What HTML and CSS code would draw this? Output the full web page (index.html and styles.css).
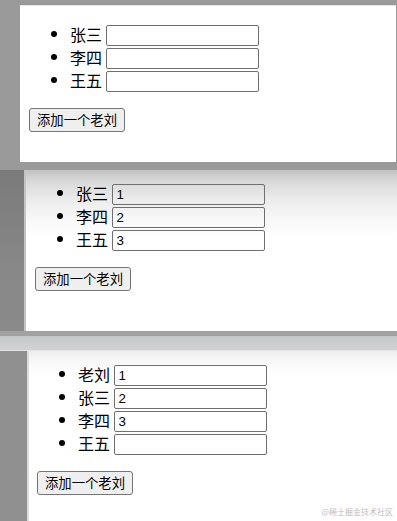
FILE: index.html
```
<!DOCTYPE html>
<html lang="zh">
<head>
<meta charset="utf-8">
<title>添加一个老刘</title>
<link rel="stylesheet" href="styles.css">
</head>
<body>
<div class="shot shot1">
  <div class="card card1">
    <ul class="list">
      <li>张三 <input class="field" type="text"></li>
      <li>李四 <input class="field" type="text"></li>
      <li>王五 <input class="field" type="text"></li>
    </ul>
    <button class="btn" type="button">添加一个老刘</button>
  </div>
</div>
<div class="shot shot2">
  <div class="gutter gutter2"></div>
  <div class="card card2">
    <ul class="list">
      <li>张三 <input class="field" type="text" value="1"></li>
      <li>李四 <input class="field" type="text" value="2"></li>
      <li>王五 <input class="field" type="text" value="3"></li>
    </ul>
    <button class="btn" type="button">添加一个老刘</button>
  </div>
</div>
<div class="sep"></div>
<div class="shot shot3">
  <div class="gutter gutter3"></div>
  <div class="card card3">
    <ul class="list">
      <li>老刘 <input class="field" type="text" value="1"></li>
      <li>张三 <input class="field" type="text" value="2"></li>
      <li>李四 <input class="field" type="text" value="3"></li>
      <li>王五 <input class="field" type="text"></li>
    </ul>
    <button class="btn" type="button">添加一个老刘</button>
  </div>
  <div class="watermark">@稀土掘金技术社区</div>
</div>
</body>
</html>
```
FILE: styles.css
```
html, body {
  margin: 0;
  padding: 0;
}
body {
  width: 397px;
  height: 521px;
  overflow: hidden;
  background: #999;
  font-family: "Liberation Sans", "Noto Sans CJK SC", sans-serif;
  color: #000;
}
.shot {
  box-sizing: border-box;
  display: flex;
}
.shot1 {
  height: 170px;
  background: #9a9a9a;
  padding: 5px 1px 8px 20px;
}
.card {
  flex: 1;
  box-sizing: border-box;
  padding-left: 9px;
}
.card1 {
  background: #fff;
  border-top: 1px solid #e4e4e4;
  padding-top: 19px;
}
.shot2 {
  height: 161px;
}
.gutter2 {
  width: 24px;
  background: linear-gradient(#7a7a7a, #888 60%, #8a8a8a);
  border-right: 2px solid #c4c4c4;
}
.card2 {
  padding-top: 14px;
  background: linear-gradient(#c2c2c2 0, #dadada 12px, #ececec 30px, #f8f8f8 50px, #fff 70px);
}
.card2 .field {
  background: transparent;
}
.sep {
  height: 20px;
  background: linear-gradient(#a2a2a2 0, #a2a2a2 5px, #c4c8c8 5px, #d0d3d3 19px, #e4e4e4 19px);
}
.shot3 {
  height: 170px;
  position: relative;
}
.gutter3 {
  width: 27px;
  background: #909090;
  border-right: 2px solid #dcdcdc;
}
.card3 {
  padding-top: 14px;
  padding-left: 8px;
  background: linear-gradient(#ededed 0, #f8f8f8 10px, #fff 24px);
}
.list {
  margin: 0 0 14px;
  padding-left: 41px;
  font-size: 16px;
  list-style: none;
}
.list li {
  height: 23px;
  line-height: 21px;
  white-space: nowrap;
}
.list li::before {
  content: "";
  display: inline-block;
  width: 6px;
  height: 6px;
  border-radius: 50%;
  background: #000;
  vertical-align: top;
  margin: 6px 13px 0 -19px;
}
.field {
  box-sizing: border-box;
  width: 153px;
  height: 21px;
  margin: 0;
  padding: 0 3px;
  vertical-align: top;
  border: 1px solid #6f6f6f;
  border-radius: 2px;
  background: #fff;
  font-family: "Liberation Sans", sans-serif;
  font-size: 13.33px;
  color: #000;
}
.btn {
  display: block;
  box-sizing: border-box;
  height: 24px;
  padding: 0 7px;
  margin: 0;
  border: 1px solid #767676;
  border-radius: 3px;
  background: #efefef;
  font-family: "Noto Sans CJK SC", sans-serif;
  font-size: 13.33px;
  color: #000;
  line-height: 20px;
}
.watermark {
  position: absolute;
  right: 4px;
  bottom: 4px;
  font-family: "Noto Sans CJK SC", sans-serif;
  font-size: 8px;
  color: #bdbdbd;
}
```
